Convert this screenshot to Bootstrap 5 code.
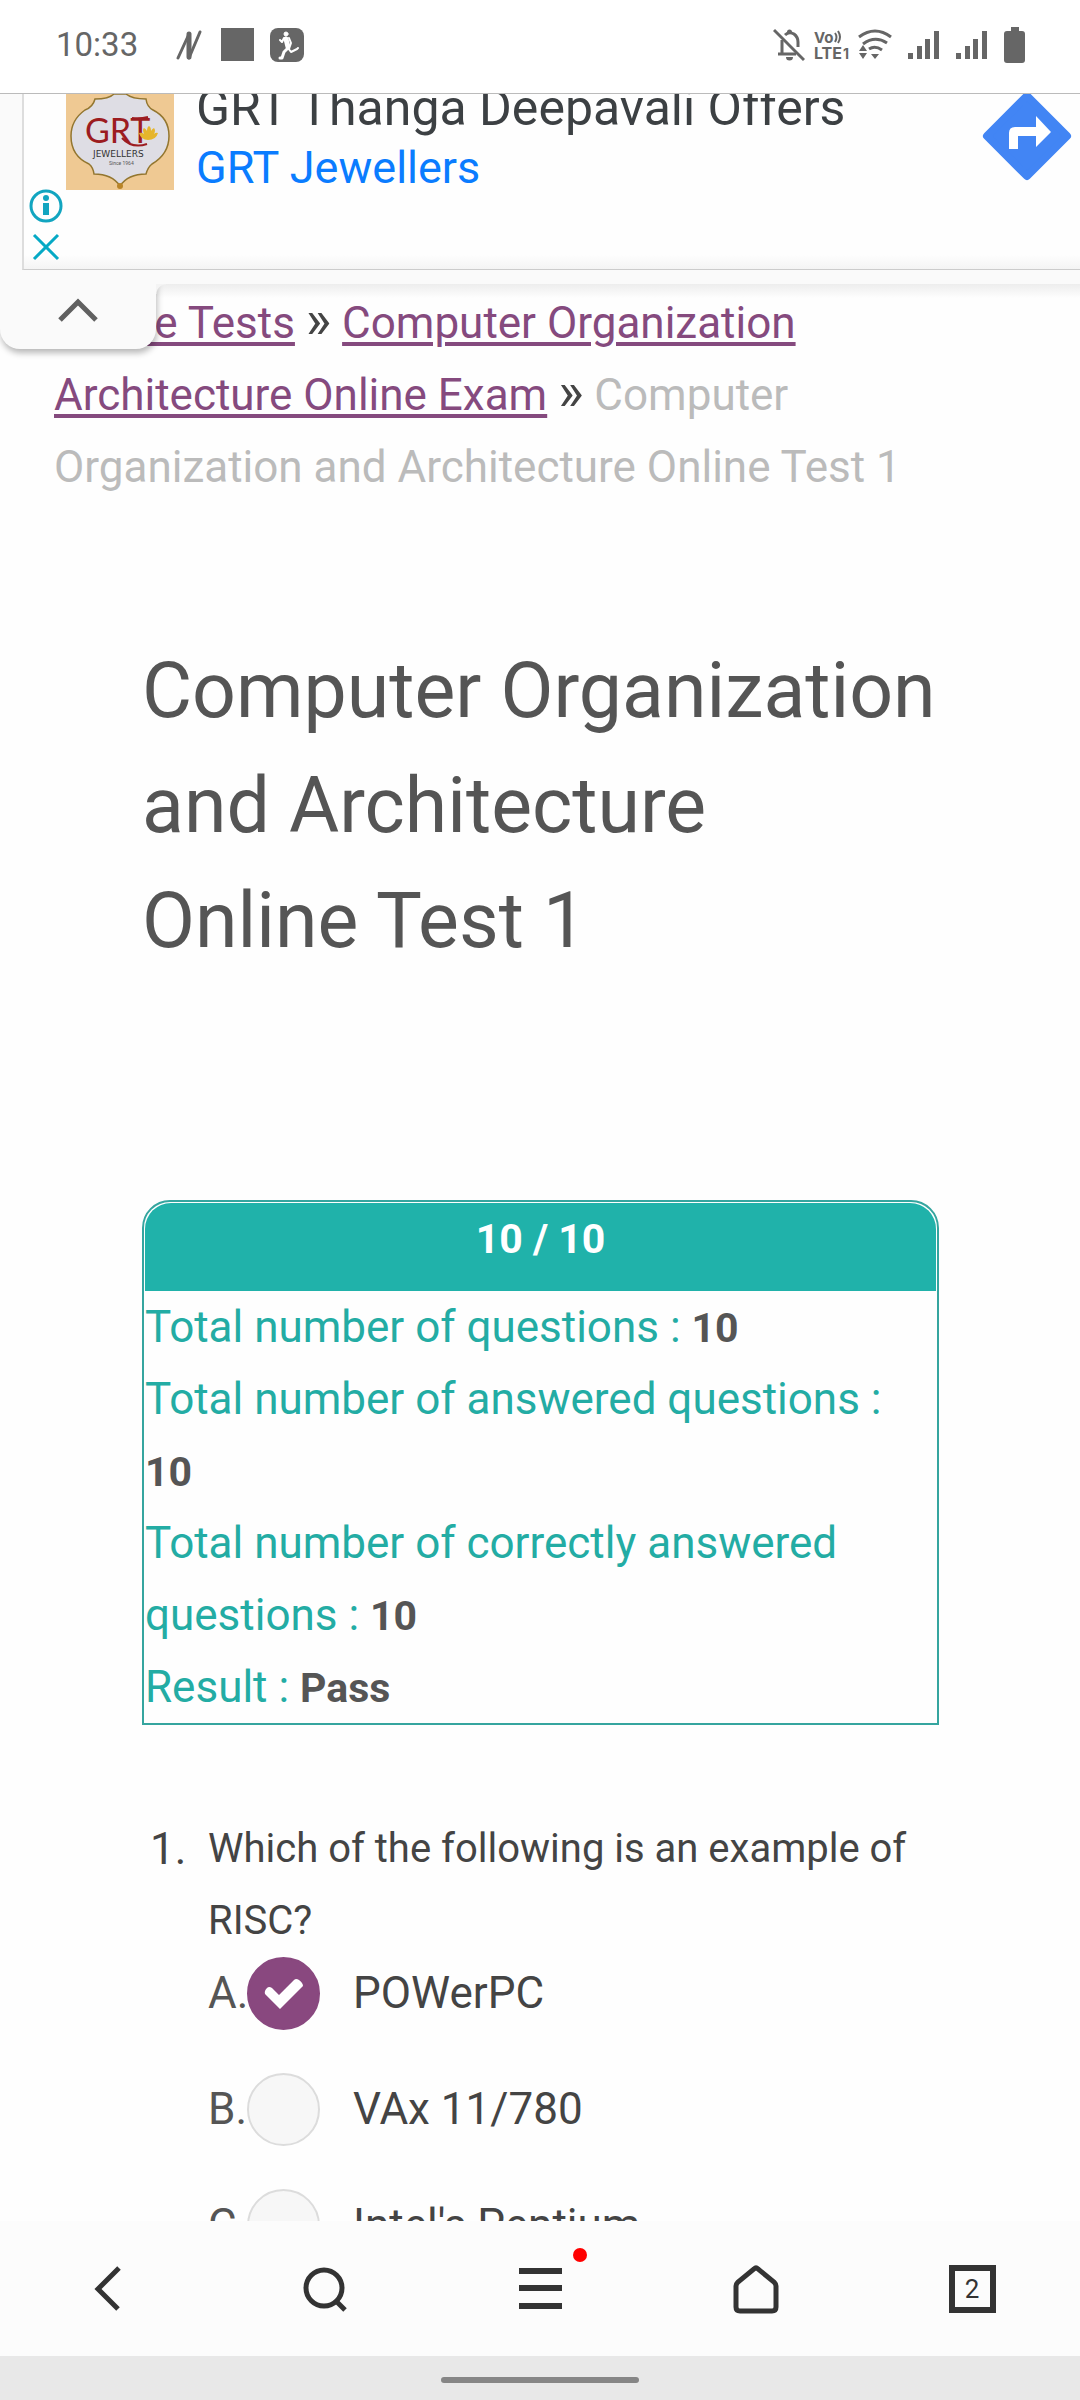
<!DOCTYPE html>
<html lang="en">
<head>
<meta charset="utf-8">
<meta name="viewport" content="width=device-width, initial-scale=1">
<title>Computer Organization and Architecture Online Test 1</title>
<link href="https://cdn.jsdelivr.net/npm/bootstrap@5.3.0/dist/css/bootstrap.min.css" rel="stylesheet">
<style>
  body { font-family: Roboto, "Liberation Sans", sans-serif; font-size: 44px; line-height: 72px; color: #444; background: #fff; }
  svg { display: block; flex: none; }
  .status-bar { height: 94px; padding: 0 54px 4px 56px; font-size: 33px; line-height: 36px; color: #666; border-bottom: 1px solid #bbb; }
  .status-left { gap: 16px; }
  .status-clock { margin-right: 22px; }
  .status-right { gap: 16px; }
  .status-net { gap: 8px; }
  .ad-banner { height: 176px; padding-left: 22px; background: #fafafa; }
  .ad-body { border-left: 2px solid #ddd; border-bottom: 1px solid #ccc; background: linear-gradient(#fefefe 92%, #f4f4f4); }
  .ad-marks { width: 42px; padding: 0 0 8px 5px; }
  .ad-logo { margin-bottom: 79px; }
  .ad-text { padding: 0 0 72px 22px; font-size: 45px; line-height: 58px; color: #3c4043; }
  .ad-title { font-size: 50px; line-height: 62px; }
  .ad-text a { color: #0a7cff; }
  .ad-go { margin: -3px 8px 0 0; }
  .ad-strip { height: 14px; background: #fafafa; }
  .page-main { min-height: 0; padding-top: 3px; background: linear-gradient(#ededed, #fefefe 14px); }
  .collapse-tab, .collapse-tab:hover { width: 156px; height: 79px; margin-top: -14px; background: #fafafa; border-radius: 0 0 20px 20px; box-shadow: 1px 4px 6px rgba(0,0,0,.28); clip-path: inset(14px -12px -14px 0); z-index: 2; }
  .collapse-tab::after { content: ""; position: absolute; left: 100%; top: 14px; width: 10px; height: 10px; background: radial-gradient(circle at 100% 100%, transparent 9px, #f4f4f4 10px); }
  .crumbs { padding: 0 54px; }
  .crumbs a { color: #854a7e; text-decoration-thickness: 4px; text-underline-offset: 4px; }
  .crumb-mark { font-size: 54px; line-height: 1; }
  .crumbs .current-page { color: #bbb; }
  .test-area { padding: 131px 141px 0 142px; }
  .test-title { font-size: 77px; line-height: 115px; font-weight: 400; color: #555; margin-bottom: 221px; }
  .score-box { border: 2px solid #35a59f; border-radius: 28px 28px 0 0; padding: 1px 1px 0; margin-bottom: 88px; color: #23aca4; }
  .score-head { background: #20b2aa; color: #fff; font-size: 41px; font-weight: 700; border-radius: 26px 26px 0 0; padding-bottom: 16px; }
  .score-box b { color: #555; font-size: 41px; line-height: 1; }
  .question { padding-left: 8px; }
  .q-number { width: 58px; }
  .q-text { font-size: 40px; }
  .choice { height: 72px; margin-bottom: 44px; color: #555; }
  .choice-letter { width: 39px; }
  .choice label { color: #444; padding-left: 33px; }
  .choice .form-check-input { width: 73px; height: 73px; margin: 0; flex: none; background-color: #f7f7f7; border: 2px solid #dcdcdc; }
  .choice .form-check-input:checked { background-color: #89487f; border-color: #89487f; background-size: 73px 73px; background-position: center;
    background-image: url("data:image/svg+xml,%3csvg xmlns='http://www.w3.org/2000/svg' viewBox='0 0 73 73'%3e%3cpath d='M18 37q-1-3 2-6q2-2 5 0l7 7L47 23q2-2 5 0q4 3 4 6L33 52Z' fill='white'/%3e%3c/svg%3e"); }
  .nav-panel { height: 135px; background: #fcfcfc; z-index: 3; }
  .nav-panel .btn { border-radius: 0; color: #333; }
  .menu-dot { width: 14px; height: 14px; background: #f00; left: 50%; top: 27px; margin-left: 33px; }
  .tab-count { width: 47px; height: 48px; border: 6px solid #333; font-size: 26px; line-height: 36px; }
  .gesture-area { height: 44px; padding-top: 4px; background: #e8e8e8; z-index: 3; }
  .gesture-bar { width: 198px; height: 6px; background: #868686; margin-bottom: 4px; margin-top: 4px; }
</style>
<script src="https://cdn.jsdelivr.net/npm/bootstrap@5.3.0/dist/js/bootstrap.bundle.min.js"></script>
</head>
<body class="vh-100 d-flex flex-column overflow-hidden">

<header class="status-bar d-flex align-items-center justify-content-between flex-shrink-0">
  <div class="status-left d-flex align-items-center">
    <span class="status-clock">10:33</span>
    <svg width="26" height="30" viewBox="0 0 26 30"><g fill="none" stroke="#666" stroke-linejoin="round" stroke-linecap="round"><path d="M2 28L13 4M13 28L24 2" stroke-width="3"/><path d="M13 4v23" stroke-width="5"/></g></svg>
    <svg width="36" height="34" viewBox="0 0 36 34"><path fill="#666" d="M3 0h33v33H3z"/></svg>
    <svg width="34" height="34" viewBox="0 0 34 34"><rect width="34" height="34" rx="8" fill="#666"/><g fill="none" stroke="#fff" stroke-linecap="round" stroke-linejoin="round"><circle cx="16" cy="6" r="2" fill="#fff" stroke-width="1"/><path d="M16 11l2 8" stroke-width="5"/><path d="M14 10l-2 4-2-2M19 10l2 5-1 3" stroke-width="2"/><path d="M17 21l-3 3-2 6h-2" stroke-width="3"/><path d="M18 20l3 4 6-3 1-1" stroke-width="2"/></g></svg>
  </div>
  <div class="status-right d-flex align-items-center">
    <div class="status-net d-flex align-items-center">
      <svg width="32" height="34" viewBox="0 0 32 34"><path d="M1 2l30 30" stroke="#666" stroke-width="3"/><path d="M5 26h18M9 26V12M12 7q4-4 9-1q4 3 4 8v5" fill="none" stroke="#666" stroke-width="3"/><path fill="#666" d="M14 4a2 2 0 015 0zM13 29h7a3 3 0 01-7 0z"/></svg>
      <svg width="37" height="34" viewBox="0 0 37 34" fill="#666" font-family="Inter, sans-serif" font-weight="700"><text x="1" y="15" font-size="15">Vo</text><text x="1" y="31" font-size="16">LTE</text><text x="30" y="31" font-size="14">1</text><path d="M22 5q3 4 0 9M25 3q4 6 0 12" fill="none" stroke="#666" stroke-width="2"/></svg>
      <svg width="34" height="34" viewBox="0 0 34 34"><g fill="none" stroke="#666" stroke-width="3"><path d="M1 9Q17-3 33 9M5 16Q17 7 29 15M11 21Q17 17 24 22"/></g><path fill="#666" d="M13 26h8l-4 5zM1 23l4-6 4 6zM1 25h8l-4 6z"/></svg>
    </div>
    <svg width="32" height="30" viewBox="0 0 32 30" fill="#666"><path d="M0 23h5v6H0zM9 16h5v13H9zM17 9h5v20h-5zM26 1h5v28h-5z"/></svg>
    <svg width="32" height="30" viewBox="0 0 32 30" fill="#666"><path d="M0 23h5v6H0zM9 16h5v13H9zM17 9h5v20h-5zM26 1h5v28h-5z"/></svg>
    <svg width="22" height="36" viewBox="0 0 22 36" fill="#666"><path d="M7 0h8v4h-8z"/><rect y="4" width="21" height="32" rx="3"/></svg>
  </div>
</header>

<aside class="ad-banner d-flex flex-shrink-0">
  <div class="ad-body d-flex flex-grow-1 overflow-hidden">
    <div class="ad-marks d-flex flex-column align-items-start justify-content-end">
      <svg width="36" height="34" viewBox="0 0 36 34"><circle cx="17" cy="17" r="15" fill="none" stroke="#12a5c0" stroke-width="3"/><circle cx="17" cy="9" r="3" fill="#12a5c0"/><path d="M14 14h6v12h-6z" fill="#12a5c0"/></svg>
      <svg class="mt-2" width="36" height="30" viewBox="0 0 36 30"><path d="M5 4l24 24M29 4L5 28" stroke="#05a9c5" stroke-width="3"/></svg>
    </div>
    <div class="ad-logo d-flex align-items-end">
      <svg width="108" height="96" viewBox="0 0 108 96">
        <path fill="#efc993" d="M0 0h108v96H0z"/>
        <path d="M48 0Q43 5 29 5Q27 13 19 16Q5 26 5 42Q5 62 23 70Q27 73 28 80Q46 80 54 92Q62 80 80 80Q82 73 86 70Q103 60 103 42Q103 24 87 16Q81 13 80 5Q66 5 60 0Z" fill="#dedde4" stroke="#93762f" stroke-width="1.500"/>
        <circle cx="54" cy="92" r="3" fill="#b98428"/>
        <text x="19" y="49" font-family="Lato, sans-serif" font-size="34" fill="#9c1c20">GRT</text>
        <path d="M66 24q8 1 16-1M56 44q10 11 25 6" fill="none" stroke="#9c1c20" stroke-width="2"/>
        <path d="M73 39q3-1 5 1q-2-5 0-6q2 1 3 3q0-4 2-5q2 1 2 5q1-2 3-3q2 2 0 6q2-2 4-1q-2 7-10 7q-7 0-9-7z" fill="#e6b52c"/>
        <text x="27" y="63" font-family="DejaVu Sans, sans-serif" font-size="9" fill="#333">JEWELLERS</text>
        <text x="43" y="71" font-family="Roboto, sans-serif" font-size="5" fill="#555">Since 1964</text>
      </svg>
    </div>
    <div class="ad-text d-flex flex-column justify-content-end text-nowrap">
      <span class="ad-title">GRT Thanga Deepavali Offers</span>
      <a href="#" class="text-decoration-none">GRT Jewellers</a>
    </div>
    <a href="#" class="ad-go ms-auto align-self-start" aria-label="Directions">
      <svg width="90" height="90" viewBox="0 0 90 90"><path d="M45 5L85 45L45 85L5 45Z" fill="#4285f4" stroke="#4285f4" stroke-width="8" stroke-linejoin="round"/><path fill="#fff" d="M27 58V42q0-6 6-6h21V25l15 16-15 15V45H36v13z"/></svg>
    </a>
  </div>
</aside>
<div class="ad-strip flex-shrink-0"></div>

<main class="page-main flex-grow-1 position-relative">
  <button type="button" class="collapse-tab btn border-0 p-0 position-absolute top-0 start-0 d-flex align-items-center justify-content-center" aria-label="Collapse">
    <svg width="42" height="26" viewBox="0 0 42 26"><path d="M3 23L21 5l18 18" fill="none" stroke="#606060" stroke-width="5"/></svg>
  </button>
  <nav class="crumbs" aria-label="breadcrumb"><a href="#">Online Tests</a> <span class="crumb-mark">»</span> <a href="#">Computer Organization Architecture Online Exam</a> <span class="crumb-mark">»</span> <span class="current-page">Computer Organization and Architecture Online Test 1</span></nav>

  <div class="test-area">
    <h1 class="test-title">Computer Organization and Architecture Online Test 1</h1>

    <section class="score-box">
      <div class="score-head text-center">10 / 10</div>
      <div>Total number of questions : <b>10</b></div>
      <div>Total number of answered questions : <b>10</b></div>
      <div>Total number of correctly answered questions : <b>10</b></div>
      <div>Result : <b>Pass</b></div>
    </section>

    <section class="question d-flex">
      <div class="q-number flex-shrink-0">1.</div>
      <div class="flex-grow-1">
        <div class="q-text">Which of the following is an example of RISC?</div>
        <div class="choice d-flex align-items-center"><span class="choice-letter">A.</span><input class="form-check-input" type="radio" name="q1" id="q1a" checked><label for="q1a">POWerPC</label></div>
        <div class="choice d-flex align-items-center"><span class="choice-letter">B.</span><input class="form-check-input" type="radio" name="q1" id="q1b"><label for="q1b">VAx 11/780</label></div>
        <div class="choice d-flex align-items-center"><span class="choice-letter">C.</span><input class="form-check-input" type="radio" name="q1" id="q1c"><label for="q1c">Intel's Pentium</label></div>
      </div>
    </section>
  </div>
</main>

<nav class="nav-panel d-flex flex-shrink-0 position-relative" aria-label="Browser">
  <button type="button" class="btn border-0 p-0 col d-flex align-items-center justify-content-center" aria-label="Back"><svg width="48" height="48" viewBox="0 0 48 48"><path d="M35 3L14 24l20 20" fill="none" stroke="#333" stroke-width="5"/></svg></button>
  <button type="button" class="btn border-0 p-0 col d-flex align-items-center justify-content-center" aria-label="Search"><svg width="48" height="48" viewBox="0 0 48 48"><g fill="none" stroke="#333" stroke-width="5"><circle cx="24" cy="23" r="18"/><path d="M36 36l9 9"/></g></svg></button>
  <button type="button" class="btn border-0 p-0 col d-flex align-items-center justify-content-center position-relative" aria-label="Menu"><svg width="48" height="48" viewBox="0 0 48 48"><path d="M3 6h43M3 23h43M3 41h43" stroke="#333" stroke-width="6"/></svg><span class="menu-dot position-absolute rounded-circle"></span></button>
  <button type="button" class="btn border-0 p-0 col d-flex align-items-center justify-content-center" aria-label="Home"><svg width="48" height="50" viewBox="0 0 48 50"><path d="M22 5q2-2 4 0L42 18q2 2 2 4V43q0 4-4 4H8q-4 0-4-4V22q0-2 2-4z" fill="none" stroke="#333" stroke-width="5"/></svg></button>
  <button type="button" class="btn border-0 p-0 col d-flex align-items-center justify-content-center" aria-label="Tabs"><span class="tab-count">2</span></button>
</nav>
<footer class="gesture-area d-flex align-items-center justify-content-center flex-shrink-0 position-relative"><div class="gesture-bar rounded-pill"></div></footer>
</body>
</html>
